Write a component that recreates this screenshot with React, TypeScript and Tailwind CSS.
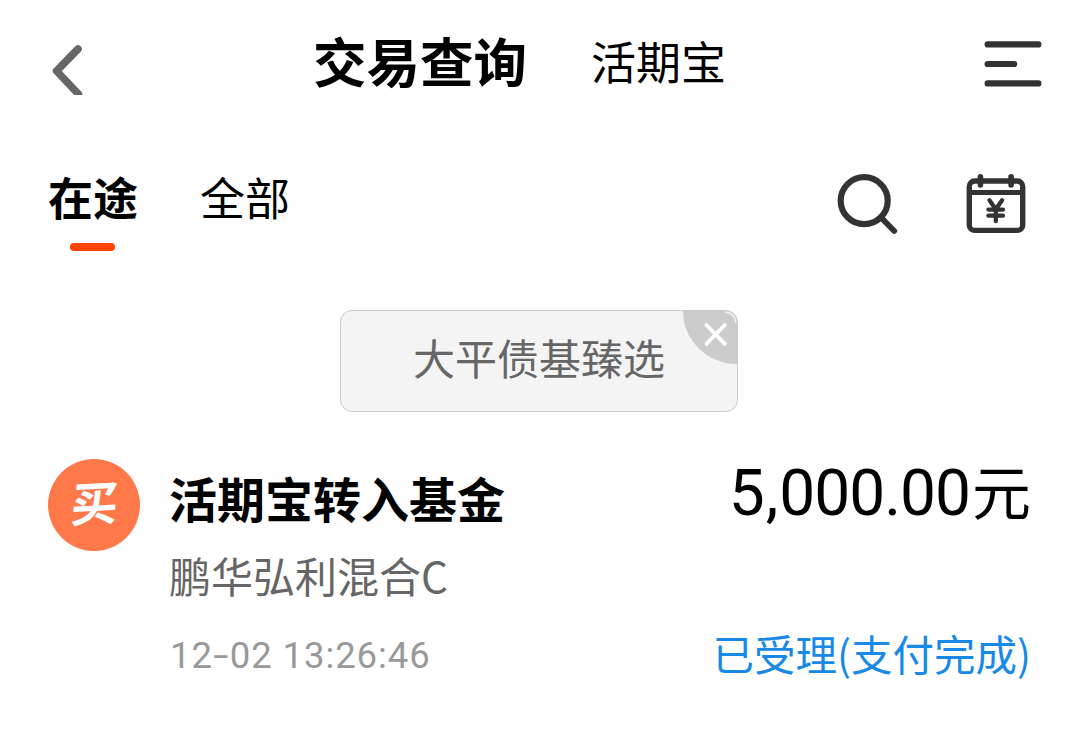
import { useState } from 'react'

interface Transaction {
  badge: string
  title: string
  fund: string
  time: string
  amount: string
  status: string
}

const transactions: Transaction[] = [
  {
    badge: '买',
    title: '活期宝转入基金',
    fund: '鹏华弘利混合C',
    time: '12-02 13:26:46',
    amount: '5,000.00',
    status: '已受理(支付完成)',
  },
]

const tabs = ['在途', '全部']

function BackIcon() {
  return (
    <svg width="32" height="50" viewBox="0 0 32 50" fill="none">
      <path
        d="M27 4L5.6 26L27.4 49"
        stroke="#666666"
        strokeWidth="7.6"
        strokeLinecap="round"
        strokeLinejoin="round"
      />
    </svg>
  )
}

function MenuIcon() {
  return (
    <svg width="58" height="48" viewBox="0 0 58 48" fill="none">
      <path
        d="M3.6 4.4H54.4M3.6 24H30.2M3.6 43.4H54.4"
        stroke="#333333"
        strokeWidth="6.2"
        strokeLinecap="round"
      />
    </svg>
  )
}

function SearchIcon() {
  return (
    <svg width="62" height="62" viewBox="0 0 62 62" fill="none" stroke="#333333">
      <circle cx="28.2" cy="26.7" r="23.5" strokeWidth="6.2" />
      <path d="M46 44.5L58.2 57" strokeWidth="5.8" strokeLinecap="round" />
    </svg>
  )
}

function CalendarIcon() {
  return (
    <svg width="60" height="60" viewBox="0 0 60 60" fill="none" stroke="#333333">
      <rect x="3.3" y="7" width="53.4" height="49.4" rx="5.5" strokeWidth="5.4" />
      <path d="M3.5 18.5H56.5" strokeWidth="5.2" />
      <path d="M14.4 2.8V11M45.1 2.8V11" strokeWidth="5.6" strokeLinecap="round" />
      <path
        d="M23.5 26.3L29.8 35.2L36.1 26.3M29.8 35.3V47.2M22.4 35.6H37M22.4 41.7H37"
        strokeWidth="4.3"
        strokeLinecap="round"
        strokeLinejoin="round"
      />
    </svg>
  )
}

export default function App() {
  const [activeTab, setActiveTab] = useState('在途')
  const [showFilter, setShowFilter] = useState(true)

  return (
    <main className="w-[1080px] h-[730px] overflow-hidden bg-white text-black whitespace-nowrap font-['Noto_Sans_CJK_SC',sans-serif]">

      {/* Header */}
      <header className="flex items-start h-[125px] pl-[51px] pr-[38px]">
        <button className="mt-[45px]">
          <BackIcon />
        </button>
        <h1 className="ml-[230px] mt-[20px] text-[53.5px] leading-[80px] font-bold">
          交易查询
        </h1>
        <span className="ml-[64px] mt-[31px] text-[45px] leading-[60px]">
          活期宝
        </span>
        <button className="ml-auto mt-[40px]">
          <MenuIcon />
        </button>
      </header>

      {/* Tabs */}
      <div className="flex items-start h-[185px] pl-[48px] pr-[54px]">
        <nav className="flex gap-[62px] pt-[42px]">
          {tabs.map((tab) => (
            <button
              key={tab}
              onClick={() => setActiveTab(tab)}
              className="flex flex-col items-center"
            >
              <span
                className={`text-[45px] leading-[60px] ${
                  activeTab === tab ? 'font-bold' : ''
                }`}
              >
                {tab}
              </span>
              {activeTab === tab && (
                <span className="mt-[16px] mr-[1px] w-[45px] h-[8px] rounded-full bg-[#ff4400]" />
              )}
            </button>
          ))}
        </nav>
        <div className="flex items-start gap-[68px] ml-auto mt-[49px]">
          <button>
            <SearchIcon />
          </button>
          <button>
            <CalendarIcon />
          </button>
        </div>
      </div>

      {/* Active filter */}
      <div className="flex justify-center h-[149px] pr-[2px]">
        {showFilter && (
          <div className="relative w-[398px] h-[102px] rounded-[12px] border border-[#cccccc] bg-[#f4f4f4] overflow-hidden text-center">
            <span className="text-[42px] leading-[92px] text-[#666666]">
              大平债基臻选
            </span>
            <button
              onClick={() => setShowFilter(false)}
              className="absolute top-0 right-0"
            >
              <svg width="54" height="53" viewBox="0 0 54 53" fill="none">
                <path d="M0 0H54V53C24 53 0 29 0 0Z" fill="#cccccc" />
                <path d="M42 1Q52 2 53 12" stroke="#f4f4f4" strokeWidth="1.4" />
                <path
                  d="M23.5 14L41.8 32.8M41.8 14L23.5 32.8"
                  stroke="#ffffff"
                  strokeWidth="3.8"
                  strokeLinecap="round"
                />
              </svg>
            </button>
          </div>
        )}
      </div>

      {/* Transactions */}
      {transactions.map((item) => {
        const [month, rest] = item.time.split('-')
        const [thousands, remainder] = item.amount.split(',')

        return (
          <section key={item.time} className="flex items-start pl-[48px] pr-[49px]">
            <div className="flex items-center justify-center w-[92px] h-[92px] rounded-full bg-[#ff784a]">
              <span className="mb-[8px] ml-[1px] text-[47px] leading-[84px] font-bold text-white -skew-x-3 -skew-y-3">
                {item.badge}
              </span>
            </div>
            <div className="ml-[29px]">
              <h2 className="mt-[6px] text-[48px] leading-[64px] font-bold">
                {item.title}
              </h2>
              <p className="mt-[16px] text-[42px] leading-[60px] text-[#666666]">
                {item.fund}
              </p>
              <p className="mt-[23px] pl-[1px] text-[36.5px] leading-[56px] tracking-[0.9px] text-[#999999] font-['Roboto','Noto_Sans_CJK_SC',sans-serif]">
                {month}
                <span className="inline-block w-[17px] pl-[3px] scale-x-150">-</span>
                {rest}
              </p>
            </div>
            <div className="ml-auto text-right">
              <p className="text-[59px] leading-[62px]">
                <span className="mr-[2px] text-[64px] tracking-[-1px] font-['Roboto','Noto_Sans_CJK_SC',sans-serif]">
                  {thousands}
                  <span className="pl-[2px] pr-[2px]">,</span>
                  {remainder}
                </span>
                元
              </p>
              <p className="mt-[99px] text-[41.5px] leading-[58px] text-[#1989e8]">
                {item.status}
              </p>
            </div>
          </section>
        )
      })}
    </main>
  )
}
